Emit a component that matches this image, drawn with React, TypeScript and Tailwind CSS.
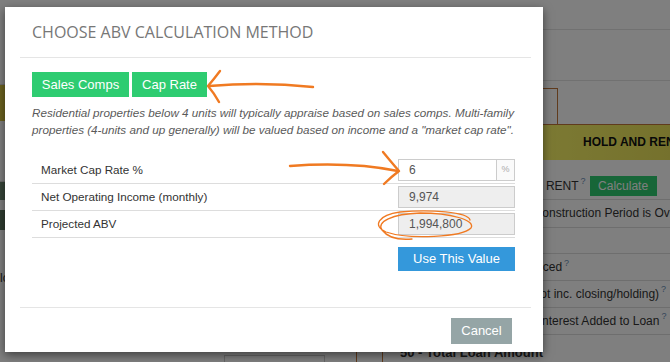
import React from 'react';

const rows = [
  { label: 'Market Cap Rate %', value: '6', editable: true },
  { label: 'Net Operating Income (monthly)', value: '9,974', editable: false },
  { label: 'Projected ABV', value: '1,994,800', editable: false },
];

const Q = () => <sup className="text-[9px] text-[#6a8db5] ml-[2px]">?</sup>;

const BackgroundPage: React.FC = () => (
  <div className="flex h-full text-[12px] text-[#333]">
    {/* left column, mostly hidden behind the dialog */}
    <div className="w-[350px] flex flex-col">
      <div className="h-[85px] border-b border-[#ddd]" />
      <div className="h-[36px] bg-gradient-to-r from-[#d9c640] to-[#f3e76a]" />
      <div className="h-[61px] border-b border-[#ddd]" />
      <div className="h-[18px] w-[24px] bg-[#6f8a73]" />
      <div className="h-[10px]" />
      <div className="h-[20px] w-[24px] bg-[#5f7a63]" />
      <div className="h-[38px]" />
      <div className="h-[20px] leading-[20px]">lc</div>
      <div className="flex-1" />
      <div className="h-[12px] flex">
        <div className="ml-[224px] w-[101px] h-[20px] mt-[5px] border border-[#ccc] bg-white" />
      </div>
    </div>

    {/* right column */}
    <div className="w-[320px] flex flex-col">
      <div className="h-[30px] border-b border-[#e3e3e3]" />
      <div className="h-[52px] border-b border-[#e3e3e3]" />
      <div className="h-[44px] border-b border-[#c0773a] flex">
        <div className="ml-[60px] w-[148px] mt-[7px] border-x border-t border-[#c0773a]" />
      </div>
      <div className="h-[36px] bg-gradient-to-r from-[#f4ee60] via-[#fcf86a] to-[#ebe35a] flex items-center pl-[233px] font-bold text-[#111] whitespace-nowrap">
        HOLD AND RENT
      </div>
      <div className="h-[40px] border-b border-[#ddd] flex items-center pl-[135px] pt-[12px] whitespace-nowrap">
        <span>MONTHLY RENT</span>
        <Q />
        <span className="ml-[4px] h-[20px] w-[67px] bg-[#2ecc71] text-white flex items-center justify-center">Calculate</span>
      </div>
      <div className="h-[28px] border-b border-[#ddd] flex items-center pl-[145px] whitespace-nowrap">
        Rehab/Construction Period is Over
      </div>
      <div className="h-[27px] border-b border-[#ddd]" />
      <div className="h-[27px] border-b border-[#ddd] flex items-center pl-[124px] whitespace-nowrap">
        Rehab Financed<Q />
      </div>
      <div className="h-[27px] border-b border-[#ddd] flex items-center pl-[123px] whitespace-nowrap">
        Total Cost (not inc. closing/holding)<Q />
      </div>
      <div className="h-[27px] border-b border-[#ddd] flex items-center pl-[160px] whitespace-nowrap">
        Total Interest Added to Loan<Q />
      </div>
      <div className="flex-1 flex">
        <div className="ml-[6px] w-[27px] border-x border-[#c0773a]" />
        <div className="ml-[17px] pt-[8px] font-bold text-[13px] whitespace-nowrap">50 - Total Loan Amount</div>
      </div>
    </div>
  </div>
);

const Annotations: React.FC = () => (
  <svg className="absolute inset-0 pointer-events-none" width="670" height="362" viewBox="0 0 670 362" fill="none">
    <g stroke="#f07a22" strokeLinecap="round" strokeLinejoin="round">
      <path d="M313 87 C 285 84, 245 83, 209 86" strokeWidth="2.4" />
      <path d="M220 71 Q 214 79 208 86 Q 214 93 219 102" strokeWidth="2.4" />
      <path d="M290 166 C 330 163, 368 165, 398 171" strokeWidth="2.4" />
      <path d="M383 152 Q 392 163 399 171 Q 391 177 384 184" strokeWidth="2.4" />
      <path d="M470 220 C 468 212, 430 209, 400 212 C 378 215, 372 226, 386 232 C 410 240, 462 237, 471 228 C 476 220, 450 213, 420 213 C 392 214, 376 222, 382 230 C 388 238, 400 240, 412 239" strokeWidth="1.3" />
    </g>
  </svg>
);

const App: React.FC = () => {
  return (
    <div className="relative w-[670px] h-[362px] overflow-hidden bg-white font-['Liberation_Sans',Arial,sans-serif]">
      <BackgroundPage />
      <div className="absolute inset-0 bg-black/50" />

      <div className="absolute left-[5px] top-[7px] w-[538px] h-[345px] bg-white shadow-[0_3px_9px_rgba(0,0,0,0.5)] flex flex-col">
        <div className="h-[50px] flex items-center pl-[27px] font-['Open_Sans',sans-serif] text-[16px] text-[#777] whitespace-nowrap">
          CHOOSE ABV CALCULATION METHOD
        </div>
        <div className="ml-[15px] mr-[12px] h-px bg-[#e5e5e5]" />

        <div className="pl-[27px] pr-[28px] pt-[14px] flex flex-col">
          <div className="flex gap-[3px]">
            <button className="h-[25px] w-[97px] bg-[#2ecc71] text-white text-[13px]">Sales Comps</button>
            <button className="h-[25px] w-[75px] bg-[#2ecc71] text-white text-[13px]">Cap Rate</button>
          </div>
          <p className="mt-[8px] italic text-[11.7px] leading-[16.5px] text-[#5a5a5a]">
            Residential properties below 4 units will typically appraise based on sales comps. Multi-family properties (4-units and up generally) will be valued based on income and a "market cap rate".
          </p>

          <div className="mt-[19px] flex flex-col">
            {rows.map((row) => (
              <div key={row.label} className="flex items-center justify-between py-[2px] border-b border-[#ddd] text-[11.7px] text-[#333]">
                <span className="pl-[9px]">{row.label}</span>
                {row.editable ? (
                  <div className="flex h-[22px] w-[117px] border border-[#ccc] bg-white">
                    <span className="flex-1 pl-[10px] flex items-center text-[#555] text-[12px]">{row.value}</span>
                    <span className="w-[18px] border-l border-[#ccc] bg-[#fafafa] flex items-center justify-center text-[9px] text-[#aaa]">%</span>
                  </div>
                ) : (
                  <div className="h-[22px] w-[117px] border border-[#ccc] bg-[#eee] pl-[10px] flex items-center text-[#555] text-[12px]">
                    {row.value}
                  </div>
                )}
              </div>
            ))}
          </div>

          <div className="flex justify-end mt-[9px]">
            <button className="h-[24px] w-[117px] bg-[#3498db] text-white text-[13px]">Use This Value</button>
          </div>
        </div>

        <div className="flex-1" />
        <div className="ml-[15px] mr-[12px] h-px bg-[#e5e5e5]" />
        <div className="h-[44px] flex justify-end items-start pt-[10px] pr-[31px]">
          <button className="h-[26px] w-[61px] bg-[#95a5a6] text-white text-[13px]">Cancel</button>
        </div>
      </div>

      <Annotations />
    </div>
  );
};

export default App;
